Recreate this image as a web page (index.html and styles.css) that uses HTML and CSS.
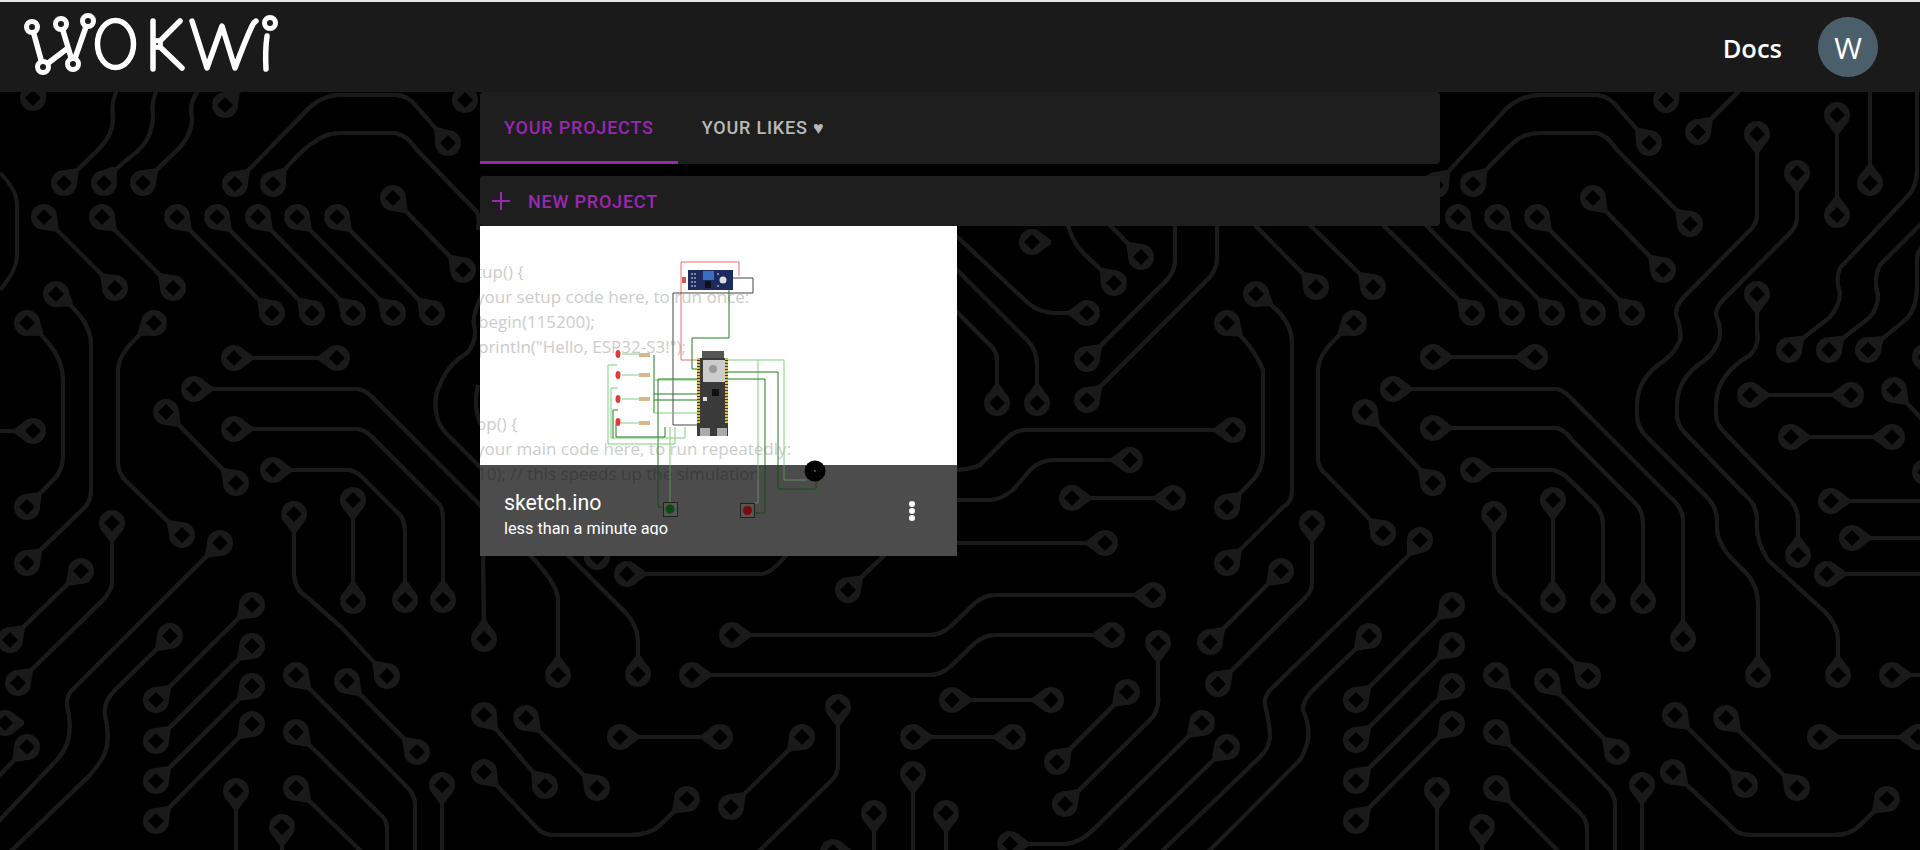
FILE: index.html
```html
<!DOCTYPE html>
<html lang="en">
<head>
    <meta charset="UTF-8">
    <meta name="viewport" content="width=device-width, initial-scale=1.0">
    <title>Wokwi - Your Projects</title>
    <link rel="stylesheet" href="styles.css">
</head>
<body>
    <!-- circuit board background -->
    <svg class="board" viewBox="0 0 1920 850" aria-hidden="true">
        <defs>
            <marker id="neck" markerUnits="userSpaceOnUse" viewBox="-20 -20 40 40" markerWidth="40" markerHeight="40" orient="auto-start-reverse">
                <path class="pad-fill" d="M-8-10L-19-2V2L-8 10z"/>
            </marker>
            <marker id="pad" markerUnits="userSpaceOnUse" viewBox="-20 -20 40 40" markerWidth="40" markerHeight="40" orient="0">
                <circle class="pad-fill" r="13"/>
                <path class="pad-hole" d="M0-8L8 0L0 8L-8 0z"/>
            </marker>
            <g id="plain">
                <path d="M0 173Q17 190 17 205V255Q17 270 0 290"/>
            </g>
            <g id="one-end">
                <path d="M64 183L98 150Q113 135 113 118Q110 100 120 85"/>
                <path d="M104 183Q115 168 133 155Q153 140 153 115Q150 100 160 85"/>
                <path d="M143 183L172 155Q192 138 192 118Q188 100 203 85"/>
                <path d="M33 98L45 85"/>
                <path d="M225 105L245 85"/>
                <path d="M465 100L470 85"/>
                <path d="M273 184Q300 150 313 143Q325 133 340 133H395Q407 135 417 150L477 212Q480 218 478 230"/>
                <path d="M220 543L72 690Q66 697 67 705Q72 725 68 740Q66 750 55 762L-5 825"/>
                <path d="M170 636L115 690Q103 702 105 715Q110 735 106 750Q103 760 90 775L7 855"/>
                <path d="M638 674V640Q637 625 625 612L450 437Q438 427 436 412Q434 395 440 385Q447 365 467 353Q478 340 474 325Q472 315 482 295"/>
                <path d="M597 557L480 423Q473 405 478 385"/>
                <path d="M33 431H-5"/>
                <path d="M5 723h.01"/>
                <path d="M27 747L-5 780"/>
                <path d="M236 791V855"/>
                <path d="M282 827V855"/>
                <path d="M442 785V855"/>
                <path d="M296 675L410 790Q415 797 415 805V855"/>
                <path d="M296 732L383 817Q387 822 387 830V855"/>
                <path d="M296 788L365 855"/>
                <path d="M484 639L483 550"/>
                <path d="M627 574H760Q770 574 782 560L795 545"/>
                <path d="M848 590L895 545"/>
                <path d="M838 707V765Q838 775 830 782L755 855"/>
                <path d="M913 774V855"/>
                <path d="M874 813V855"/>
                <path d="M946 813V855"/>
                <path d="M833 852h.01"/>
                <path d="M1032 242h.01"/>
                <path d="M1114 283Q1100 268 1085 255Q1070 240 1067 220"/>
                <path d="M1141 257L1105 220"/>
                <path d="M1087 313H1055Q1040 313 1028 303L950 230"/>
                <path d="M1037 403V365Q1037 350 1027 340L950 263"/>
                <path d="M997 403V360Q997 352 990 345L950 305"/>
                <path d="M1087 359L1165 282Q1175 272 1175 260V220"/>
                <path d="M1087 400L1205 282Q1217 272 1217 258V220"/>
                <path d="M1316 287L1250 220"/>
                <path d="M1373 287L1305 220"/>
                <path d="M1472 313L1380 222"/>
                <path d="M1512 313L1423 222"/>
                <path d="M1666 100L1680 85"/>
                <path d="M1698 132L1745 85"/>
                <path d="M1870 183V85"/>
                <path d="M1789 350Q1800 340 1807 335L1830 317Q1840 305 1840 293Q1835 280 1840 268L1907 197Q1917 187 1917 170V85"/>
                <path d="M1829 350Q1840 340 1847 335L1870 317Q1878 308 1878 295Q1873 280 1880 265L1925 220"/>
                <path d="M1868 350Q1880 340 1887 335L1905 320Q1917 310 1917 285V260Q1917 250 1925 245"/>
                <path d="M1894 390L1925 422"/>
                <path d="M1925 357h.01"/>
                <path d="M1925 472h.01"/>
                <path d="M1831 501H1925"/>
                <path d="M1852 538H1925"/>
                <path d="M1827 574H1925"/>
                <path d="M1892 675H1925"/>
                <path d="M1496 675L1610 790Q1615 797 1615 805V855"/>
                <path d="M1496 732L1580 813Q1587 820 1587 830V855"/>
                <path d="M1496 788L1562 855"/>
                <path d="M1482 827V855"/>
                <path d="M1642 785V855"/>
                <path d="M1437 790V855"/>
                <path d="M1420 540L1407 557L1270 690Q1264 697 1265 705Q1270 725 1270 737Q1268 750 1260 757L1158 855"/>
                <path d="M1369 636L1313 690Q1303 700 1303 710Q1310 725 1308 740Q1305 752 1300 760L1205 855"/>
                <path d="M1233 430H1025Q1015 430 1005 440L980 465Q970 470 950 470"/>
                <path d="M1130 460H1055Q1040 460 1030 470L1013 490Q1000 500 990 500H950"/>
                <path d="M1105 543H950"/>
                <path d="M1227 747L1115 855"/>
            </g>
            <g id="two-ends">
                <path d="M235 184L307 110Q322 95 340 95H395Q408 95 417 107L437 130L448 143"/>
                <path d="M44 217L115 288"/>
                <path d="M102 217L173 288"/>
                <path d="M177 217L272 313"/>
                <path d="M217 217L312 313"/>
                <path d="M258 217L353 313"/>
                <path d="M297 217L393 313"/>
                <path d="M337 217L432 313"/>
                <path d="M393 198L463 270"/>
                <path d="M56 294Q91 318 91 345V490Q91 503 82 510L27 563"/>
                <path d="M27 323Q63 350 63 380V455Q63 470 55 478L27 507"/>
                <path d="M154 323Q118 350 118 370V462Q118 472 125 480L182 535"/>
                <path d="M234 358H337"/>
                <path d="M112 523V583Q112 590 103 600L18 683"/>
                <path d="M81 571L10 640"/>
                <path d="M194 389H358Q365 390 372 397L525 550Q558 583 558 600V675"/>
                <path d="M234 429H358Q365 430 372 437L440 505Q443 510 443 520V600"/>
                <path d="M273 470H350Q358 472 365 480L400 515Q405 520 405 535V600"/>
                <path d="M166 412L236 483"/>
                <path d="M294 514V575Q295 590 307 597L342 628L387 676"/>
                <path d="M353 500V601"/>
                <path d="M347 681L417 752"/>
                <path d="M252 605L156 700"/>
                <path d="M252 646L156 741"/>
                <path d="M252 686L156 781"/>
                <path d="M252 724L156 821"/>
                <path d="M484 715L545 786"/>
                <path d="M526 718L597 788"/>
                <path d="M484 772L537 828Q543 835 555 835H630Q650 835 660 825L687 799"/>
                <path d="M620 737H720"/>
                <path d="M732 635H930Q940 635 950 627L975 603Q985 595 995 595H1153"/>
                <path d="M692 675H930Q940 675 950 667L975 643Q985 635 995 635H1112"/>
                <path d="M802 737L731 807"/>
                <path d="M913 737H1013"/>
                <path d="M952 700H1051"/>
                <path d="M1458 217L1552 313"/>
                <path d="M1497 217L1593 313"/>
                <path d="M1537 217L1632 313"/>
                <path d="M1593 198L1663 270"/>
                <path d="M1473 184Q1490 165 1513 143Q1523 133 1540 133H1597Q1607 135 1617 150L1690 224"/>
                <path d="M1436 185L1507 108Q1522 95 1540 95H1597Q1610 96 1620 110L1649 143"/>
                <path d="M1757 134V215Q1757 225 1748 232L1683 298Q1676 305 1676 315Q1682 330 1680 340Q1675 352 1665 360Q1637 378 1637 405V415Q1637 428 1647 437L1705 495Q1717 507 1717 520Q1715 540 1730 557L1745 572Q1758 585 1758 605V675"/>
                <path d="M1797 173V215Q1798 225 1790 233L1723 300Q1716 307 1716 315Q1722 330 1719 340Q1715 352 1705 360Q1677 378 1677 405V415Q1677 425 1685 433L1745 495Q1757 505 1757 520Q1755 540 1768 560L1825 612Q1838 625 1838 640V675"/>
                <path d="M1757 294V330Q1760 345 1750 355Q1716 375 1716 405V415Q1716 425 1727 435L1785 495Q1798 505 1798 520V555"/>
                <path d="M1433 428H1557Q1565 430 1572 440L1635 503Q1643 510 1643 525V601"/>
                <path d="M1393 389H1557Q1563 390 1570 397L1670 497Q1683 508 1683 520V639"/>
                <path d="M1365 412L1433 483"/>
                <path d="M1473 470H1553Q1562 472 1570 480L1595 505Q1603 513 1603 525V601"/>
                <path d="M1433 357H1535"/>
                <path d="M1837 115V215"/>
                <path d="M1750 395H1851"/>
                <path d="M1791 437H1892"/>
                <path d="M1553 500V600"/>
                <path d="M1494 514V575Q1495 590 1507 597L1588 676"/>
                <path d="M1452 605L1356 700"/>
                <path d="M1452 645L1356 740"/>
                <path d="M1452 686L1356 781"/>
                <path d="M1452 724L1356 821"/>
                <path d="M1547 681L1617 752"/>
                <path d="M1675 715L1745 785"/>
                <path d="M1726 718L1797 788"/>
                <path d="M1673 772L1737 832Q1743 835 1755 835H1835Q1850 835 1860 825L1887 799"/>
                <path d="M1820 737H1918"/>
                <path d="M1256 294Q1280 310 1285 320Q1292 330 1292 345V490Q1292 503 1283 507L1227 563"/>
                <path d="M1281 571L1210 642"/>
                <path d="M1312 523V580Q1313 590 1305 598L1218 684"/>
                <path d="M1227 323Q1253 345 1263 370V455Q1262 470 1253 480L1227 507"/>
                <path d="M1354 323Q1318 350 1318 370V460Q1320 470 1325 473L1383 533"/>
                <path d="M1072 498H1173"/>
                <path d="M1158 643V695Q1160 710 1150 720L1065 804"/>
                <path d="M1127 692L1057 762"/>
                <path d="M1202 723L1093 830Q1080 843 1065 844H1010"/>
            </g>
        </defs>
        <use href="#plain" class="traces"/>
        <use href="#one-end" class="traces start-neck"/>
        <use href="#two-ends" class="traces both-neck"/>
        <use href="#one-end" class="traces start-pad"/>
        <use href="#two-ends" class="traces both-pad"/>
    </svg>

    <header class="topbar">
        <a class="logo" href="#" aria-label="Wokwi">
            <svg width="290" height="90" viewBox="0 0 290 90">
                <g class="logo-lines">
                    <path d="M32 26L43 66L68 47M61 23L73 63L88 20"/>
                    <ellipse cx="115.500" cy="43" rx="18" ry="23.500"/>
                    <path d="M153 20V68M180 20L157 43L182 67"/>
                    <path d="M192 20L207 67L222 25L235 67Q245 40 252 25Q254 21 256 20"/>
                    <path d="M267 35Q265 50 266 68"/>
                </g>
                <g class="logo-pads">
                    <circle cx="32" cy="26" r="5.500"/>
                    <circle cx="61" cy="23" r="5.500"/>
                    <circle cx="88" cy="20" r="5.500"/>
                    <circle cx="43" cy="66" r="5.500"/>
                    <circle cx="73" cy="63" r="5.500"/>
                    <circle cx="157" cy="43" r="3.500"/>
                    <circle cx="270" cy="22" r="5.500"/>
                </g>
            </svg>
        </a>
        <nav class="topnav">
            <a class="docs" href="#">Docs</a>
            <div class="avatar">W</div>
        </nav>
    </header>

    <main class="content">
        <div class="tabs">
            <button class="tab active">Your Projects</button>
            <button class="tab">Your Likes ♥</button>
        </div>
        <div class="new-project">
            <svg class="plus" width="18" height="18" viewBox="0 0 18 18"><path d="M9 0V18M0 9H18"/></svg>
            <span>New Project</span>
        </div>
        <div class="project-grid">
            <article class="project">
                <svg class="preview" viewBox="480 226 477 330" width="477" height="330">
                    <g class="code">
                        <text x="476" y="278">tup() {</text>
                        <text x="476" y="303">your setup code here, to run once:</text>
                        <text x="478" y="328">begin(115200);</text>
                        <text x="478" y="353">println("Hello, ESP32-S3!");</text>
                        <text x="476" y="430">op() {</text>
                        <text x="476" y="455">your main code here, to run repeatedly:</text>
                        <text x="477" y="480">10); // this speeds up the simulation</text>
                    </g>
                    <!-- wires -->
                    <g class="wires">
                        <path class="w-red" d="M739 276V262H681V360H700"/>
                        <path class="w-gray" d="M733 278H753V293H673V425H700"/>
                        <path class="w-dark" d="M729 285V338H692V369H698"/>
                        <path class="w-light" d="M622 354H644M622 375H644M622 399H644M621 423H644"/>
                        <path class="w-dark" d="M654 355V413M654 394H698M654 400H698"/>
                        <path class="w-light" d="M654 413H698M654 405V413M654 380H698"/>
                        <path class="w-dark" d="M658 379H698M658 379V465"/>
                        <path class="w-light" d="M617 365H608V444H675V427M618 388H611V438M611 438H685V427"/>
                        <path class="w-dark" d="M618 410H613V438M617 424H616V437H665V427"/>
                        <path class="w-light" d="M670 427V465M728 360H784V465M758 360V465"/>
                        <path class="w-dark" d="M728 372H778V465M728 379H765V465"/>
                    </g>
                    <!-- light sensor -->
                    <rect class="ldr" x="682" y="277" width="4" height="6"/>
                    <rect class="sensor" x="688" y="270" width="45" height="20"/>
                    <rect class="sensor-pot" x="703" y="271" width="11" height="9"/>
                    <rect class="sensor-chip" x="705" y="281" width="6" height="7"/>
                    <circle class="sensor-led" cx="723" cy="280" r="3.500"/>
                    <path class="sensor-dots" d="M691 274H696M691 278H696M691 282H696M691 286H696M717 274H720M717 286H720"/>
                    <!-- esp32 board -->
                    <rect class="esp-antenna" x="702" y="351" width="22" height="8"/>
                    <rect class="esp" x="697" y="358" width="31" height="78"/>
                    <path class="esp-pins" d="M698.500 358V424M726.500 358V424"/>
                    <rect class="esp-module" x="703" y="360" width="22" height="22"/>
                    <circle class="esp-mark" cx="713" cy="369" r="4"/>
                    <rect class="esp-chip" x="712" y="389" width="7" height="7"/>
                    <rect class="esp-white" x="703" y="397" width="4" height="4"/>
                    <rect class="esp-usb" x="700" y="428" width="10" height="8"/>
                    <rect class="esp-usb" x="717" y="428" width="10" height="8"/>
                    <!-- leds and resistors -->
                    <g class="leds">
                        <ellipse cx="618" cy="354" rx="2.500" ry="4"/>
                        <ellipse cx="618" cy="375" rx="2.500" ry="4"/>
                        <ellipse cx="618" cy="399" rx="2.500" ry="4"/>
                        <ellipse cx="618" cy="422" rx="2.500" ry="4"/>
                    </g>
                    <g class="resistors">
                        <rect x="639" y="353" width="11" height="4"/>
                        <rect x="639" y="373" width="11" height="4"/>
                        <rect x="639" y="397" width="11" height="4"/>
                        <rect x="639" y="421" width="11" height="4"/>
                    </g>
                </svg>
                <div class="project-bar">
                    <div class="project-info">
                        <div class="project-name">sketch.ino</div>
                        <div class="project-time">less than a minute ago</div>
                    </div>
                    <div class="kebab"><i></i><i></i><i></i></div>
                </div>
                <!-- parts of the preview that stay visible on top of the bar -->
                <svg class="preview-top" viewBox="480 226 477 330" width="477" height="330">
                    <g class="wires">
                        <path class="w-light-dim" d="M670 465V503M758 465V503H754M784 465V480H807"/>
                        <path class="w-dark-dim" d="M658 465V507H664M765 465V513H754M778 465V489H816V481"/>
                    </g>
                    <rect class="btn-body" x="663.500" y="502.500" width="14" height="14"/>
                    <circle class="btn-green" cx="670" cy="509" r="4.500"/>
                    <rect class="btn-body" x="740.500" y="503.500" width="14" height="14"/>
                    <circle class="btn-red" cx="747.500" cy="510.500" r="4.500"/>
                    <circle class="buzzer" cx="815" cy="471" r="10.500"/>
                    <circle class="buzzer-hole" cx="815" cy="471" r="1"/>
                </svg>
            </article>
        </div>
    </main>
</body>
</html>
```

FILE: styles.css
```css
html, body {
    height: 100%;
}
body {
    margin: 0;
    background-color: #000;
    color: #fff;
    font-family: Roboto, sans-serif;
    overflow: hidden;
    position: relative;
}
a {
    color: inherit;
    text-decoration: none;
}

/* background */
.board {
    position: absolute;
    left: 0;
    top: 0;
    width: 1920px;
    height: 850px;
}
.traces {
    fill: none;
    stroke: #1a1a1a;
    stroke-width: 4;
}
.start-neck {
    marker-start: url(#neck);
}
.both-neck {
    marker-start: url(#neck);
    marker-end: url(#neck);
}
.start-pad {
    marker-start: url(#pad);
}
.both-pad {
    marker-start: url(#pad);
    marker-end: url(#pad);
}
.pad-fill {
    fill: #1a1a1a;
    stroke: none;
}
.pad-hole {
    fill: #000;
    stroke: none;
}

/* top bar */
.topbar {
    position: relative;
    box-sizing: border-box;
    height: 92px;
    border-top: 2px solid #e6e6e6;
    background-color: #1a1a1a;
    display: flex;
    justify-content: space-between;
    align-items: center;
    padding-right: 42px;
}
.logo {
    display: block;
    height: 90px;
    margin-top: -2px;
}
.logo-lines {
    fill: none;
    stroke: #fff;
    stroke-width: 5.500;
    stroke-linecap: round;
    stroke-linejoin: round;
}
.logo-pads {
    fill: #1a1a1a;
    stroke: #fff;
    stroke-width: 5;
}
.topnav {
    display: flex;
    align-items: center;
    gap: 36px;
}
.docs {
    font-family: "Open Sans", sans-serif;
    font-size: 25.500px;
    font-weight: 600;
    padding-top: 2px;
}
.avatar {
    width: 60px;
    height: 60px;
    border-radius: 50%;
    background-color: #4b5f6b;
    display: flex;
    align-items: center;
    justify-content: center;
    font-family: "Open Sans", sans-serif;
    font-size: 30px;
}

/* content */
.content {
    position: relative;
    width: 960px;
    margin: 0 auto;
}
.tabs, .new-project {
    background-color: #1e1e1e;
    border-radius: 4px;
}
.tabs {
    display: flex;
    height: 72px;
}
.tab {
    padding: 2px 24px 0;
    border: none;
    border-bottom: 3px solid transparent;
    background: none;
    color: rgba(255, 255, 255, 0.7);
    font-family: Roboto, sans-serif;
    font-size: 18px;
    font-weight: 500;
    letter-spacing: 0.8px;
    text-transform: uppercase;
}
.tab.active {
    color: #9c27b0;
    border-bottom-color: #9c27b0;
}
.new-project {
    margin-top: 12px;
    height: 50px;
    display: flex;
    align-items: center;
    gap: 18px;
    padding-left: 12px;
    color: #9c27b0;
    font-size: 18px;
    font-weight: 500;
    letter-spacing: 0.8px;
    text-transform: uppercase;
}
.plus {
    fill: none;
    stroke: #9c27b0;
    stroke-width: 2;
}
.project-grid {
    display: grid;
    grid-template-columns: 477px;
}

/* project card */
.project {
    position: relative;
    width: 477px;
    height: 330px;
    background-color: #fff;
    overflow: hidden;
}
.preview {
    display: block;
}
.preview-top {
    position: absolute;
    left: 0;
    top: 0;
}
.code {
    fill: #ccc;
    font-family: "Open Sans", sans-serif;
    font-size: 17px;
}
.wires {
    fill: none;
    stroke-width: 1;
}
.w-red { stroke: #f06a6a; }
.w-gray { stroke: #444; }
.w-dark { stroke: #1f7f1f; }
.w-light { stroke: #7fcf7f; }
.w-light-dim { stroke: #5e8f5e; }
.w-dark-dim { stroke: #174f17; }
.ldr { fill: #d9534f; }
.sensor { fill: #1c2a5e; }
.sensor-pot { fill: #3a6fc0; }
.sensor-chip { fill: #111; }
.sensor-led { fill: #ddd; }
.sensor-dots {
    stroke: #ddd;
    stroke-width: 1;
    stroke-dasharray: 2 1;
}
.esp-antenna { fill: #555; }
.esp { fill: #3a3a3a; }
.esp-pins {
    fill: none;
    stroke: #e0c020;
    stroke-width: 3;
    stroke-dasharray: 2 1;
}
.esp-module { fill: #ccc; }
.esp-mark { fill: #999; }
.esp-chip { fill: #111; }
.esp-white { fill: #ddd; }
.esp-usb { fill: #aaa; }
.leds { fill: #e03b3b; }
.resistors { fill: #d8b88a; }
.btn-body { fill: #555; stroke: #222; stroke-width: 1; }
.btn-green { fill: #0a4a0a; }
.btn-red { fill: #7d0a0a; }
.buzzer { fill: #000; }
.buzzer-hole { fill: #666; }
.project-bar {
    position: absolute;
    left: 0;
    right: 0;
    bottom: 0;
    height: 91px;
    background-color: rgba(0, 0, 0, 0.7);
    display: flex;
    align-items: center;
    justify-content: space-between;
    padding: 0 42px 0 24px;
    box-sizing: border-box;
}
.project-info {
    align-self: flex-start;
    padding-top: 25px;
}
.project-name {
    font-size: 21.300px;
    line-height: 26px;
}
.project-time {
    margin-top: 3px;
    font-size: 16.300px;
    line-height: 20px;
    height: 16px;
    overflow: hidden;
}
.kebab {
    display: flex;
    flex-direction: column;
    gap: 1px;
}
.kebab i {
    width: 6px;
    height: 6px;
    border-radius: 50%;
    background-color: #fff;
}
```
